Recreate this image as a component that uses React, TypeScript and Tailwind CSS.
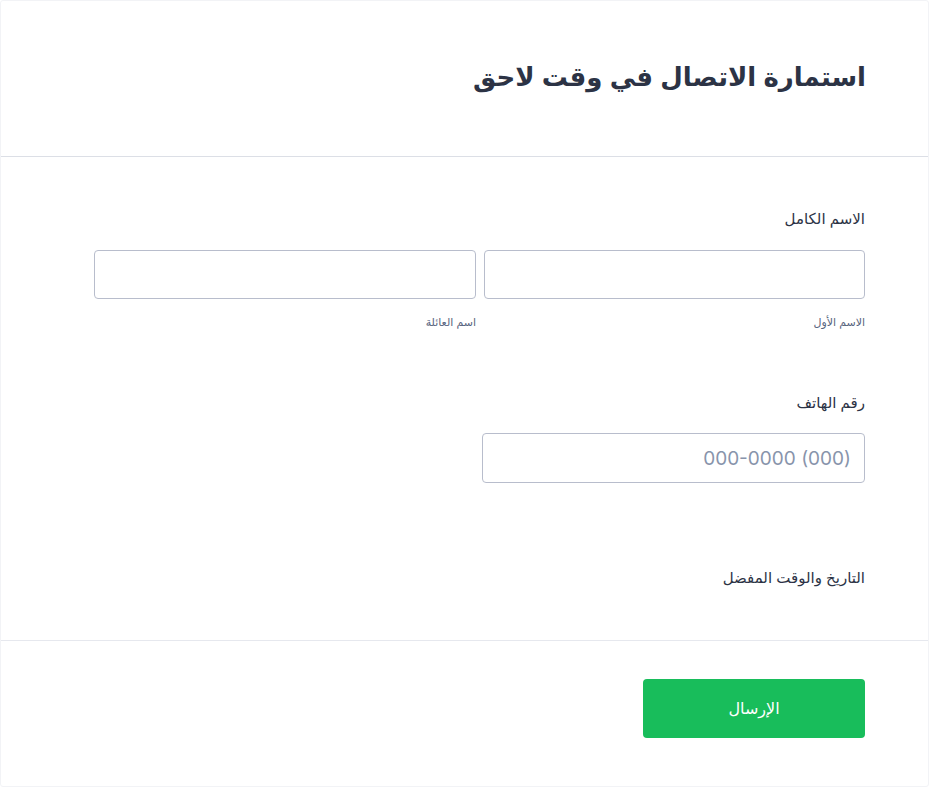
import React from "react";

export default function App() {
  const font = { fontFamily: '"Liberation Sans", "DejaVu Sans", Arial, sans-serif' };
  return (
    <div className="w-[930px] h-[788px] bg-white" style={font}>
      <div dir="rtl" className="w-[929px] h-[787px] bg-white border border-[#f2f3f6] rounded-[3px] flex flex-col">
        <div className="h-[156px] shrink-0 border-b border-[#dcdfe6] pr-[62px] pl-[93px] flex items-center">
          <h1 className="text-[26px] font-bold text-[#2c3345] leading-none -mt-1">استمارة الاتصال في وقت لاحق</h1>
        </div>
        <div className="pr-[63px] pl-[93px] pt-[51px] flex flex-col">
          <label className="text-[15px] text-[#2c3345] leading-[22px]">الاسم الكامل</label>
          <div className="flex gap-2 mt-[20px]">
            <div className="flex flex-col w-[382px]">
              <input className="h-[49px] w-full rounded-[4px] border border-[#b8bdcc] bg-white" />
              <span className="text-[11px] text-[#57647e] mt-[15px] leading-4">الاسم الأول</span>
            </div>
            <div className="flex flex-col w-[383px]">
              <input className="h-[49px] w-full rounded-[4px] border border-[#b8bdcc] bg-white" />
              <span className="text-[11px] text-[#57647e] mt-[15px] leading-4">اسم العائلة</span>
            </div>
          </div>
          <label className="text-[15px] text-[#2c3345] leading-[22px] mt-[62px]">رقم الهاتف</label>
          <input
            placeholder="(000) 000-0000"
            className="h-[50px] w-[383px] mt-[19px] rounded-[4px] border border-[#b8bdcc] bg-white px-[13px] text-[19px] placeholder:text-[#8894ab]"
            style={{ fontFamily: 'Inter, "Liberation Sans", sans-serif' }}
          />
          <label className="text-[15px] text-[#2c3345] leading-[22px] mt-[84px]">التاريخ والوقت المفضل</label>
        </div>
        <div className="mt-[51px] border-t border-[#e6e8ee] pr-[63px] pt-[38px]">
          <button className="w-[222px] h-[59px] rounded-[4px] bg-[#18bd5b] text-white text-[16px]">الإرسال</button>
        </div>
      </div>
    </div>
  );
}
